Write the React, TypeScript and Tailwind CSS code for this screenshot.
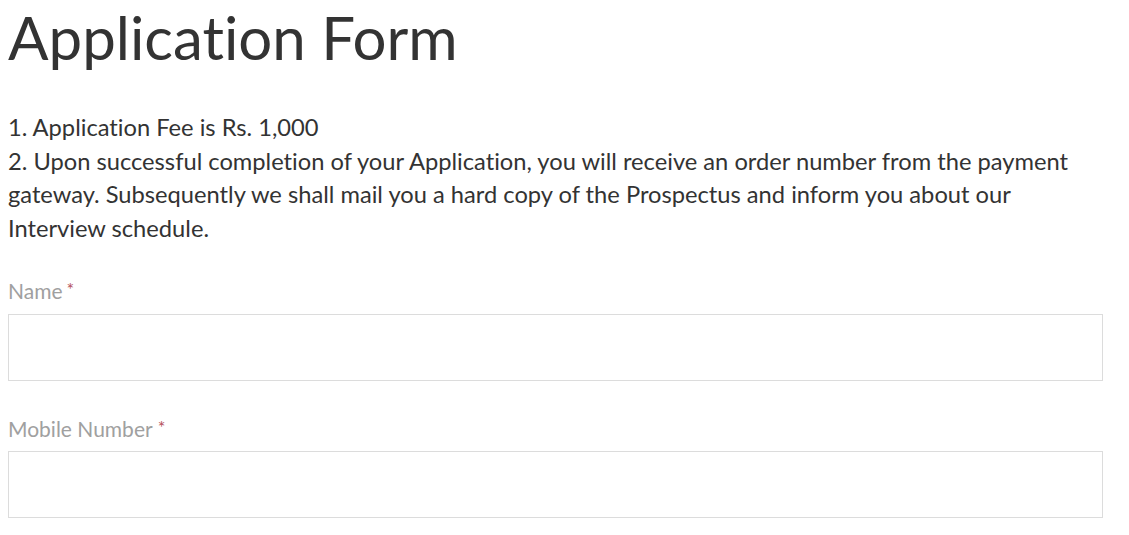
export default function App() {
  return (
    <div className="min-h-[535px] bg-white font-['Lato',sans-serif] text-[#333] [font-variant-ligatures:none]">
      <div className="pl-2 w-[1103px]">
        <h1 className="text-[60px] leading-[1] pt-[7px] text-[#333] font-normal">Application Form</h1>
        <div className="mt-[44px] text-[23.7px] leading-[33.5px] text-[#333]">
          <p>1. Application Fee is Rs. 1,000</p>
          <p>2. Upon successful completion of your Application, you will receive an order number from the payment gateway. Subsequently we shall mail you a hard copy of the Prospectus and inform you about our Interview schedule.</p>
        </div>
        <div className="mt-[32px]">
          <label className="block text-[21px] leading-[28px] text-[#a0a0a0]">
            Name<span className="text-[#b5525c] text-[18px] relative -top-[3px] ml-[4px]">*</span>
          </label>
          <div className="mt-[8px] h-[67px] border border-[#dcdcdc] bg-white" />
        </div>
        <div className="mt-[34px]">
          <label className="block text-[21px] leading-[28px] text-[#a0a0a0]">
            Mobile Number<span className="text-[#b5525c] text-[18px] relative -top-[3px] ml-[5px]">*</span>
          </label>
          <div className="mt-[7px] h-[67px] border border-[#dcdcdc] bg-white" />
        </div>
      </div>
    </div>
  );
}
